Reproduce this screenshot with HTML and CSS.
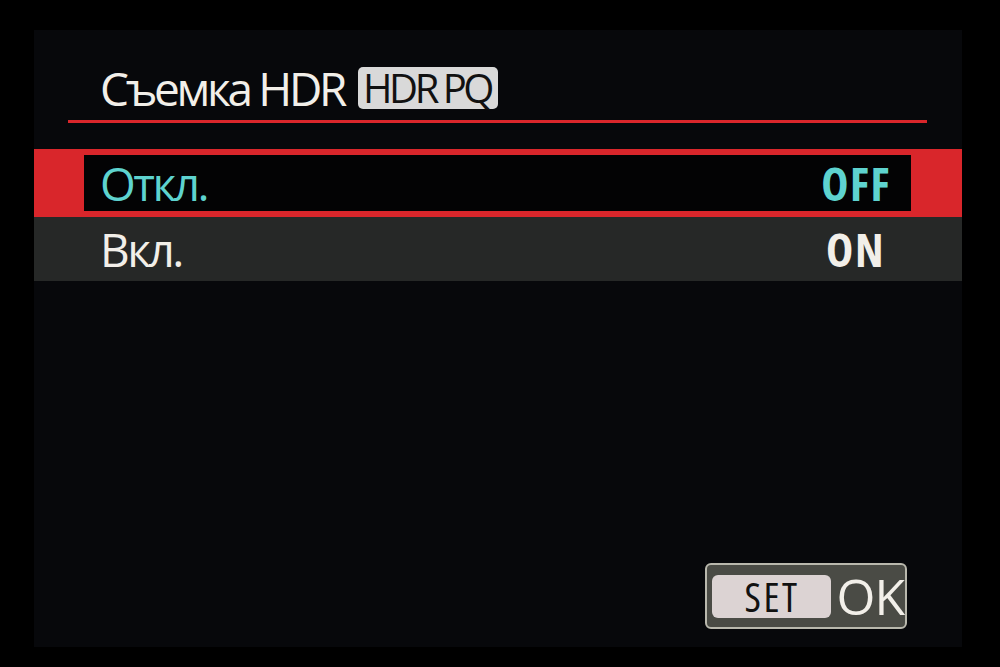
FILE: index.html
```html
<!DOCTYPE html>
<html lang="ru">
<head>
    <meta charset="UTF-8">
    <meta name="viewport" content="width=device-width, initial-scale=1.0">
    <title>Съемка HDR</title>
    <link rel="stylesheet" href="styles.css">
</head>
<body>
    <div class="screen">
        <div class="menu-title">
            <span class="title-text">Съемка HDR</span>
            <span class="badge">HDR PQ</span>
        </div>
        <div class="title-rule"></div>

        <div class="options">
            <div class="option selected">
                <div class="option-inner">
                    <span class="option-label">Откл.</span>
                    <span class="option-value">OFF</span>
                </div>
            </div>
            <div class="option">
                <div class="option-inner">
                    <span class="option-label">Вкл.</span>
                    <span class="option-value">ON</span>
                </div>
            </div>
        </div>

        <div class="footer">
            <div class="set-ok">
                <span class="set-key">SET</span>
                <span class="ok-text">OK</span>
            </div>
        </div>
    </div>
</body>
</html>
```

FILE: styles.css
```css
:root {
    --outer: #000000;
    --screen: #07080b;
    --red: #d9262b;
    --cyan: #5ed3cf;
    --text: #f2efe9;
    --row-dark: #262827;
    --badge: #d9d9d9;
}

* {
    margin: 0;
    padding: 0;
    box-sizing: border-box;
}

body {
    background-color: var(--outer);
    width: 1000px;
    height: 667px;
    padding: 30px 38px 20px 34px;
    font-family: "Open Sans", "DejaVu Sans", sans-serif;
    font-stretch: 90%;
    color: var(--text);
}

.screen {
    background-color: var(--screen);
    width: 928px;
    height: 617px;
    display: flex;
    flex-direction: column;
}

.menu-title {
    display: flex;
    align-items: center;
    gap: 14px;
    padding: 36px 0 0 66px;
    height: 80px;
}

.title-text {
    font-size: 46px;
    line-height: 44px;
    letter-spacing: -3.3px;
}

.badge {
    background-color: var(--badge);
    color: #111;
    font-size: 40px;
    line-height: 42px;
    padding: 0 7px 0 5px;
    border-radius: 5px;
    font-weight: 500;
    letter-spacing: -3.5px;
}

.title-rule {
    height: 3px;
    background-color: var(--red);
    margin: 10px 35px 0 34px;
}

.options {
    margin-top: 26px;
    display: flex;
    flex-direction: column;
}

.option {
    height: 64px;
    background-color: var(--row-dark);
}

.option.selected {
    height: 68px;
    background-color: var(--red);
    padding: 6px 51px 6px 50px;
}

.option-inner {
    height: 100%;
    display: flex;
    align-items: center;
    justify-content: space-between;
    padding: 0 78px 0 66px;
}

.selected .option-inner {
    background-color: #030304;
    padding: 0 21px 0 16px;
}

.option-label {
    font-size: 46px;
    letter-spacing: -2.5px;
}

.option-value {
    font-size: 46px;
    font-weight: bold;
    font-stretch: 75%;
    letter-spacing: 1.5px;
    margin-right: -1px;
}

.selected .option-label,
.selected .option-value {
    color: var(--cyan);
}

.footer {
    margin-top: auto;
    display: flex;
    justify-content: flex-end;
    padding: 0 55px 18px 0;
}

.set-ok {
    display: flex;
    align-items: center;
    gap: 5px;
    background-color: #4a4b45;
    border: 2px solid #b9b8ad;
    border-radius: 6px;
    padding: 9px 1px 9px 5px;
    height: 66px;
}

.set-key {
    background-color: #dcd3d3;
    color: #111;
    border-radius: 6px;
    width: 119px;
    height: 43px;
    display: flex;
    align-items: center;
    justify-content: center;
    font-size: 40px;
    font-weight: 500;
    font-stretch: 75%;
    letter-spacing: 2.5px;
}

.ok-text {
    font-size: 50px;
    line-height: 44px;
    letter-spacing: -1px;
    color: var(--text);
}
```
